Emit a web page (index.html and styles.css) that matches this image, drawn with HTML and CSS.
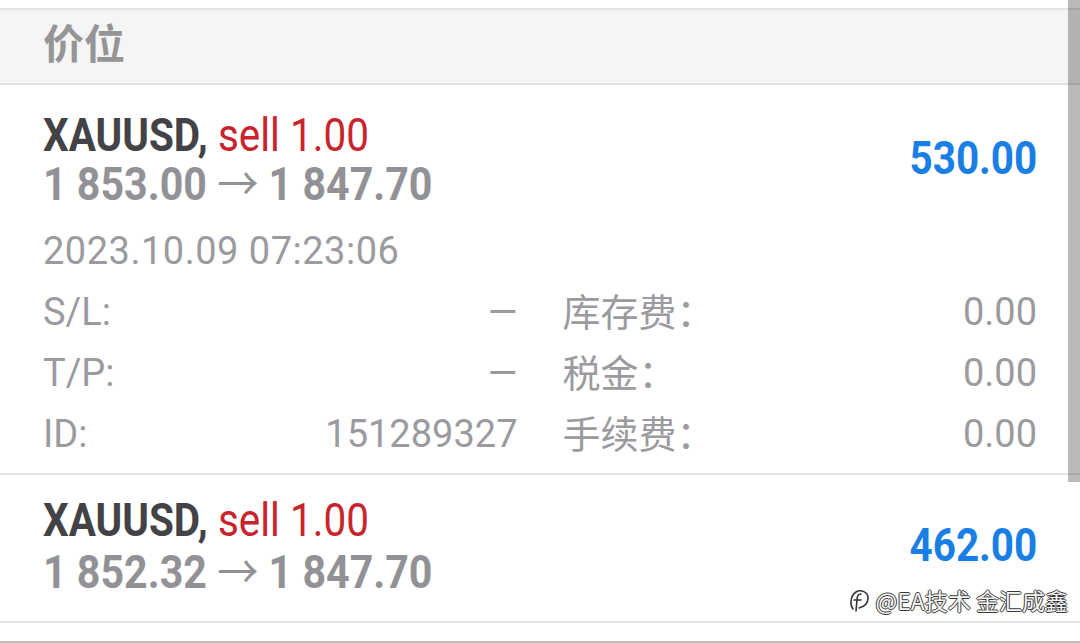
FILE: index.html
```html
<!DOCTYPE html>
<html lang="zh">
<head>
  <meta charset="UTF-8">
  <meta name="viewport" content="width=device-width, initial-scale=1.0">
  <title>价位</title>
  <link rel="stylesheet" href="styles.css">
</head>
<body>
  <div id="screen">
    <div class="top-gap"></div>
    <div class="section-head">价位</div>

    <div class="trade first">
      <div class="trade-main">
        <div class="trade-info">
          <div class="line"><span class="cond"><b class="sym">XAUUSD,</b> <span class="side">sell 1.00</span></span></div>
          <div class="line price"><span class="cond">1 853.00 <span class="arrow">→</span> 1 847.70</span></div>
        </div>
        <div class="profit"><span class="cond">530.00</span></div>
      </div>
      <div class="time">2023.10.09 07:23:06</div>
      <div class="details">
        <div class="cell"><span>S/L:</span><span>—</span></div>
        <div class="cell"><span class="cn">库存费：</span><span>0.00</span></div>
        <div class="cell"><span>T/P:</span><span>—</span></div>
        <div class="cell"><span class="cn">税金：</span><span>0.00</span></div>
        <div class="cell"><span>ID:</span><span>151289327</span></div>
        <div class="cell"><span class="cn">手续费：</span><span>0.00</span></div>
      </div>
    </div>

    <div class="trade second">
      <div class="trade-main">
        <div class="trade-info">
          <div class="line"><span class="cond"><b class="sym">XAUUSD,</b> <span class="side">sell 1.00</span></span></div>
          <div class="line price"><span class="cond">1 852.32 <span class="arrow">→</span> 1 847.70</span></div>
        </div>
        <div class="profit"><span class="cond">462.00</span></div>
      </div>
    </div>

    <div class="bottom-gap"></div>

    <div class="scrollbar"></div>

    <div class="watermark">
      <svg width="22" height="26" viewBox="0 0 22 26">
        <path d="M5 22 C2 18 2 9 8 5 C13 2 20 5 20 11 C20 17 15 20 11 21" fill="none" stroke="#fff" stroke-width="4" stroke-linecap="round"/>
        <path d="M5 22 C2 18 2 9 8 5 C13 2 20 5 20 11 C20 17 15 20 11 21" fill="none" stroke="#333" stroke-width="1.6" stroke-linecap="round"/>
        <path d="M13 7 C10 7 9 9 9 13 L8 24 M6 13 L13 13" fill="none" stroke="#fff" stroke-width="4" stroke-linecap="round"/>
        <path d="M13 7 C10 7 9 9 9 13 L8 24 M6 13 L13 13" fill="none" stroke="#333" stroke-width="1.6" stroke-linecap="round"/>
      </svg>
      <span>@EA技术 金汇成鑫</span>
    </div>
  </div>
</body>
</html>
```

FILE: styles.css
```css
html, body {
  margin: 0;
  padding: 0;
  background: #fff;
}

body {
  font-family: Roboto, 'Noto Sans CJK SC', sans-serif;
}

#screen {
  position: relative;
  width: 1080px;
  height: 643px;
  overflow: hidden;
  background: #fff;
}

.top-gap {
  height: 8px;
  border-bottom: 2px solid #e4e4e4;
}

.section-head {
  height: 73px;
  line-height: 62px;
  padding-left: 43px;
  background: #f5f5f5;
  border-bottom: 2px solid #e2e2e2;
  color: #959597;
  font-family: 'Noto Sans CJK SC', sans-serif;
  font-weight: 700;
  font-size: 41px;
}

.trade {
  padding: 0 43px;
  border-bottom: 2px solid #e6e6e6;
}

.trade.first {
  padding-top: 26px;
  padding-bottom: 8px;
}

.trade.second {
  padding-top: 21px;
  padding-bottom: 24px;
}

.trade-main {
  display: flex;
  justify-content: space-between;
  align-items: center;
}

.line {
  height: 49px;
  line-height: 49px;
  font-size: 46px;
  white-space: nowrap;
}

.second .line + .line {
  margin-top: 3px;
}

.cond {
  display: inline-block;
  transform: scaleX(0.88);
  transform-origin: left center;
}

.price .cond {
  transform: scaleX(0.895);
}

.sym {
  font-weight: 700;
  color: #434347;
}

.side {
  color: #c9232b;
}

.price {
  font-weight: 700;
  color: #929296;
}

.arrow {
  font-weight: 400;
}

.profit {
  font-size: 46px;
  font-weight: 700;
  color: #1a7fe5;
  white-space: nowrap;
  margin-top: -4px;
}

.profit .cond {
  transform-origin: right center;
}

.time {
  margin-top: 12px;
  font-size: 38px;
  line-height: 61px;
  color: #9b9b9f;
  letter-spacing: 0.5px;
}

.details {
  display: grid;
  grid-template-columns: 1fr 1fr;
  column-gap: 45px;
  font-size: 38px;
  line-height: 61px;
  color: #9b9b9f;
}

.cell {
  display: flex;
  justify-content: space-between;
  height: 61px;
}

.cn {
  font-family: 'Noto Sans CJK SC', sans-serif;
  font-size: 38px;
  line-height: 55px;
}

.bottom-gap {
  height: 18px;
  border-bottom: 2px solid #bdbdbd;
}

.scrollbar {
  position: absolute;
  top: 0;
  right: 0;
  width: 12px;
  height: 482px;
  background: rgba(0, 0, 0, 0.27);
}

.watermark {
  position: absolute;
  right: 12px;
  top: 583px;
  display: flex;
  align-items: center;
  gap: 6px;
  font-family: 'Noto Sans CJK SC', sans-serif;
  font-size: 23px;
  color: #f6f6f6;
  text-shadow: 1px 0 0 #3a3a3a, -1px 0 0 #3a3a3a, 0 1px 0 #3a3a3a, 0 -1px 0 #3a3a3a;
}
```
